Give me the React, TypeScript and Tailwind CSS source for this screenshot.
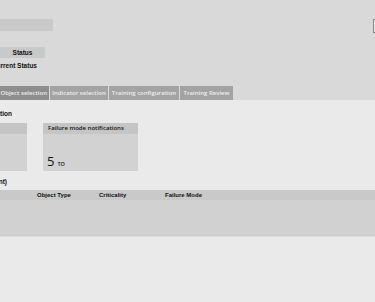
export default function App() {
  return (
    <div className="flex h-[302px] w-[375px] flex-col overflow-hidden bg-[#d9d9d9] font-['Liberation_Sans',sans-serif] text-[#111]">
      {/* header area */}
      <div className="flex h-[100px] shrink-0 flex-col">
        <div className="mt-[19px] flex items-start justify-between">
          <div className="h-[12px] w-[53px] bg-[#c9c9c9]" />
          <div className="-mr-[8px] h-[14px] w-[10px] border border-[#8a8a8a] bg-[#e4e4e4]" />
        </div>
        <div className="mt-[14px] flex h-[11px] w-[45px] items-center justify-center bg-[#c9c9c9] text-[6.5px] font-bold">
          Status
        </div>
        <div className="mt-[3px] flex w-[37px] justify-end overflow-hidden whitespace-nowrap text-[6.5px] leading-[10px] font-bold">
          Current Status
        </div>
        <div className="mt-auto flex h-[14px] gap-[1px] whitespace-nowrap font-['Open_Sans',sans-serif] text-[6px] font-semibold text-[#eeeeee]">
          <div className="flex w-[49px] items-center justify-end overflow-hidden bg-[#8d8d8d] pr-[2px]">
            Object selection
          </div>
          <div className="flex w-[58px] items-center justify-center bg-[#a3a3a3]">Indicator selection</div>
          <div className="flex w-[70px] items-center justify-center bg-[#a3a3a3]">Training configuration</div>
          <div className="flex w-[53px] items-center justify-center bg-[#a3a3a3]">Training Review</div>
        </div>
      </div>

      {/* content */}
      <div className="flex flex-1 flex-col bg-[#eaeaea]">
        <div className="mt-[10px] flex w-[12px] justify-end overflow-hidden whitespace-nowrap text-[6.5px] leading-[8px] font-bold">
          Selection
        </div>
        <div className="mt-[5px] flex gap-[16px]">
          <div className="flex h-[48px] w-[27px] flex-col bg-[#d2d2d2]">
            <div className="h-[11px] bg-[#c5c5c5]" />
          </div>
          <div className="flex h-[48px] w-[95px] flex-col bg-[#d2d2d2] font-['Open_Sans',sans-serif]">
            <div className="flex h-[11px] items-center bg-[#c5c5c5] pl-[5px] text-[6px] font-semibold">
              Failure mode notifications
            </div>
            <div className="mt-auto mb-[2px] flex items-baseline gap-[3px] pl-[4px]">
              <span className="text-[13px] leading-[15px]">5</span>
              <span className="text-[5.5px] font-semibold">TO</span>
            </div>
          </div>
        </div>
        <div className="mt-[7px] flex w-[7px] justify-end overflow-hidden whitespace-nowrap text-[6.5px] leading-[8px] font-bold">
          (Current)
        </div>
        <div className="mt-[4px] flex h-[10px] items-center bg-[#c9c9c9] text-[6px] font-bold">
          <span className="ml-[37px] w-[62px]">Object Type</span>
          <span className="w-[66px]">Criticality</span>
          <span>Failure Mode</span>
        </div>
        <div className="h-[37px] border-b border-[#dedede] bg-[#d1d1d1]" />
      </div>
    </div>
  );
}
